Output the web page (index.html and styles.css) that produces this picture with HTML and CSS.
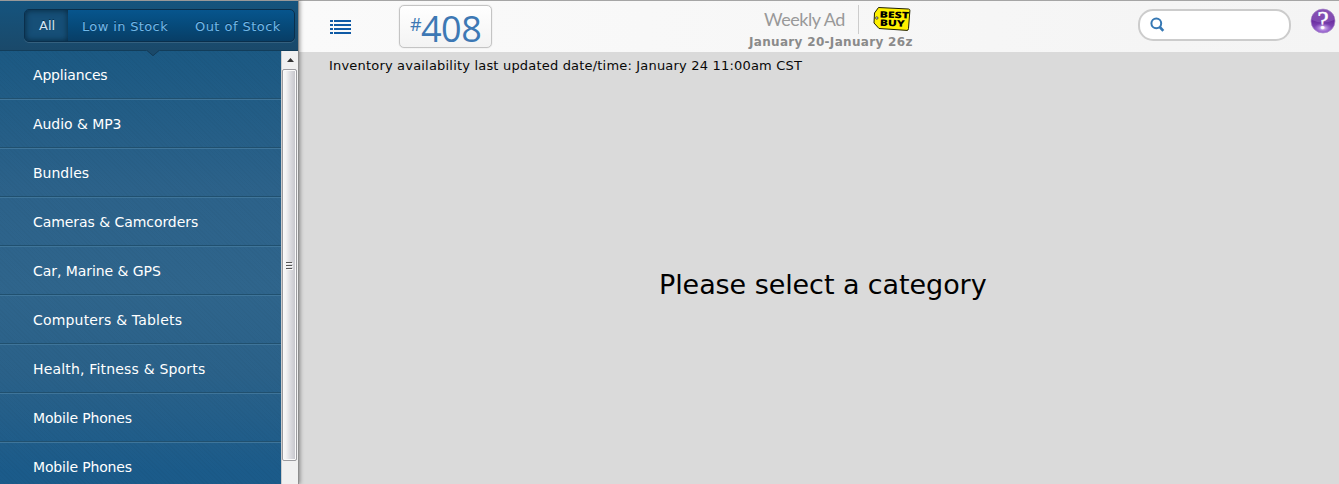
FILE: index.html
```html
<!DOCTYPE html>
<html lang="en">
<head>
<meta charset="utf-8">
<title>Inventory</title>
<link rel="stylesheet" href="styles.css">
</head>
<body>
<div class="app">
  <aside class="sidebar">
    <div class="filters">
      <div class="tabs">
        <span class="tab tab-all">All</span>
        <span class="tab tab-low">Low in Stock</span>
        <span class="tab tab-out">Out of Stock</span>
      </div>
      <svg class="notch" width="14" height="7" viewBox="0 0 14 7"><path d="M0 0H14L7 6Z" fill="#1a496a"/><path d="M1 .5L7 5.7L13 .5" fill="none" stroke="#143b57"/></svg>
    </div>
    <div class="panel">
      <ul class="list">
        <li class="tight">Appliances</li>
        <li class="snug">Audio &amp; MP3</li>
        <li>Bundles</li>
        <li class="snug">Cameras &amp; Camcorders</li>
        <li class="snug">Car, Marine &amp; GPS</li>
        <li class="wide">Computers &amp; Tablets</li>
        <li class="wide">Health, Fitness &amp; Sports</li>
        <li class="tight">Mobile Phones</li>
        <li class="tight">Mobile Phones</li>
      </ul>
      <div class="scrollbar">
        <svg class="arrow" width="17" height="17" viewBox="0 0 17 17"><path d="M5 11L8.500 7L12 11Z" fill="#333"/></svg>
        <div class="thumb">
          <svg width="8" height="9" viewBox="0 0 8 9"><path d="M0 1.500H6M0 4.500H6M0 7.500H6" stroke="#555"/><path d="M1 2.500H7M1 5.500H7M1 8.500H7" stroke="#f8f8f8"/></svg>
        </div>
      </div>
    </div>
  </aside>
  <main class="main">
    <header class="header">
      <svg class="menu" width="21" height="15" viewBox="0 0 21 15" shape-rendering="crispEdges" fill="#0f5aa5"><path d="M0 0h3v2H0zM0 4h3v2H0zM0 8h3v2H0zM0 12h3v2H0zM4 0h17v2H4zM4 4h17v2H4zM4 8h17v2H4zM4 12h17v2H4z"/></svg>
      <div class="store"><span class="hash">#</span><span class="num">408</span></div>
      <div class="ad">
        <div class="ad-top">
          <span class="weekly">Weekly Ad</span>
          <svg class="logo" width="38" height="26" viewBox="0 0 38 26">
            <path d="M5.500 1.500L35.500 3Q37 3.200 36.900 4.500L35.500 22.500Q35.300 24.500 34 24.400L6 22.500L1 17L1.500 7Z" fill="#fff100" stroke="#202000" stroke-width="1"/>
            <circle cx="3.800" cy="12" r="1.200" fill="#eee" stroke="#222" stroke-width=".8"/>
            <g transform="rotate(2 20 13)" font-family="Open Sans, sans-serif" font-weight="800" fill="#000">
              <text x="6.500" y="12" font-size="9" textLength="29.500" lengthAdjust="spacingAndGlyphs">BEST</text>
              <text x="7" y="20.300" font-size="9" textLength="25" lengthAdjust="spacingAndGlyphs">BUY</text>
            </g>
          </svg>
        </div>
        <div class="dates">January 20-January 26z</div>
      </div>
      <div class="search">
        <svg width="15" height="16" viewBox="0 0 15 16" fill="none" stroke="#3678b4"><circle cx="6.300" cy="6.300" r="4.900" stroke-width="2"/><path d="M9.800 10L13.300 13.800" stroke-width="2.600"/></svg>
      </div>
      <svg class="help" width="26" height="30" viewBox="0 -3 26 30">
        <defs>
          <linearGradient id="orb" x1="0" y1="0" x2="0" y2="1"><stop offset="0" stop-color="#7438a4"/><stop offset=".5" stop-color="#6b2ea0"/><stop offset="1" stop-color="#9560ce"/></linearGradient>
          <radialGradient id="glow"><stop offset="0" stop-color="#efdcff"/><stop offset="1" stop-color="#b080e0" stop-opacity="0"/></radialGradient>
        </defs>
        <circle cx="13" cy="13" r="12" fill="url(#orb)" stroke="#a98bc8" stroke-width=".7"/>
        <path d="M2 12Q13 17 24 12A11 11 0 0 0 2 12Z" fill="#a980d0" opacity=".35"/>
        <ellipse cx="13" cy="20" rx="9" ry="5" fill="url(#glow)"/>
        <text x="13" y="20.500" text-anchor="middle" font-family="Liberation Serif, serif" font-size="25" fill="#fff" stroke="#fff" stroke-width=".5">?</text>
      </svg>
    </header>
    <div class="updated">Inventory availability last updated date/time: January 24 11:00am CST</div>
    <div class="empty">Please select a category</div>
  </main>
</div>
</body>
</html>
```
FILE: styles.css
```css
* { box-sizing: border-box; }
body { margin: 0; font-family: Verdana, "DejaVu Sans", sans-serif; }
.app { display: flex; width: 1339px; height: 484px; overflow: hidden; background: #dadada; }
.sidebar { width: 299px; flex: none; display: flex; flex-direction: column; position: relative; z-index: 1; border-right: 1px solid #8d8d8d; box-shadow: 1px 0 4px rgba(0,0,0,.4); }
.filters { height: 51px; flex: none; padding: 8px 0 0 24px; position: relative; z-index: 1; border-top: 1px solid #999; border-bottom: 1px solid #123d5a; background: linear-gradient(#15547e, #1a496a); }
.tabs { width: 271px; height: 33px; display: flex; border: 1px solid #0a2f4c; border-radius: 5px; background: linear-gradient(#07558d, #064a7a 50%, #083e66); box-shadow: 0 1px 0 rgba(255,255,255,.12); font-size: 13px; line-height: 33px; color: #72b8e8; text-shadow: 0 -1px 0 #063050; white-space: nowrap; }
.tab-all { width: 43px; padding-left: 14px; line-height: 31px; color: #d4e6f3; background: #164f77; border-radius: 4px 0 0 4px; box-shadow: inset 0 0 6px #06263d; }
.tab-low { padding-left: 14px; width: 113px; letter-spacing: .36px; }
.tab-out { letter-spacing: .45px; padding-left: 14px; }
.notch { position: absolute; left: 146px; top: 49px; }
.panel { flex: 1; display: flex; min-height: 0; }
.list { width: 281px; margin: -1px 0 0; padding: 0; list-style: none; background: repeating-linear-gradient(45deg, rgba(0,0,0,.025) 0 1px, transparent 1px 3px), linear-gradient(#1b5983, #2c628a 32%, #2f658c 55%, #2a6189 75%, #1b5b8a 97%); }
.list li { height: 49px; padding-left: 33px; border-top: 1px solid #3f759a; border-bottom: 1px solid #20506f; color: #fff; font-size: 14px; line-height: 49px; white-space: nowrap; }
.list .tight { letter-spacing: -.17px; }
.list .snug { letter-spacing: -.06px; }
.list .wide { letter-spacing: .18px; }
.scrollbar { width: 17px; background: #f0f0f0; display: flex; flex-direction: column; border-left: 1px solid #ccc; }
.arrow { display: block; flex: none; }
.thumb { margin: 1px 1px 0 0; height: 392px; flex: none; display: flex; align-items: center; justify-content: center; border: 1px solid #9b9b9f; border-radius: 2px; box-shadow: inset 0 0 0 1px #fafafa; background: linear-gradient(90deg, #f5f5f5 20%, #dcdce0 55%, #c4c4ca); }
.main { flex: 1; display: flex; flex-direction: column; min-width: 0; }
.header { height: 52px; flex: none; display: flex; align-items: flex-start; border-top: 1px solid #a5a5a5; background: linear-gradient(90deg, #fafafa, #f4f4f4); }
.menu { margin: 19px 0 0 31px; flex: none; }
.store { margin: 4px 0 0 48px; width: 93px; height: 43px; flex: none; display: flex; padding-left: 10px; border: 1px solid #c4c4c4; border-radius: 5px; background: linear-gradient(#fff, #f3f3f3); box-shadow: 0 0 1px #bbb; color: #3d78b4; font-family: "Open Sans", sans-serif; }
.hash { font-size: 18px; line-height: 36px; width: 11px; }
.num { font-size: 36px; line-height: 46px; letter-spacing: -.5px; }
.ad { margin: 4px 0 0 257px; width: 166px; flex: none; }
.ad-top { height: 29px; display: flex; align-items: flex-start; }
.weekly { width: 110px; height: 29px; padding-left: 15px; border-right: 1px solid #ccc; color: #999; font-family: Lato, sans-serif; font-weight: 400; font-size: 18px; letter-spacing: -.45px; line-height: 28px; white-space: nowrap; }
.logo { margin-left: 14px; flex: none; margin-top: 1px; }
.dates { color: #8a8a8a; font-weight: bold; font-size: 12px; letter-spacing: .32px; line-height: 17px; white-space: nowrap; }
.search { width: 153px; height: 32px; margin: 8px 0 0 223px; flex: none; padding: 6px 0 0 10px; border: 2px solid #ccc; border-radius: 15px; background: #fff; }
.help { margin: 4px 0 0 19px; flex: none; }
.updated { height: 26px; padding: 4px 0 0 30px; font-size: 13px; letter-spacing: .19px; line-height: 20px; white-space: nowrap; color: #080808; }
.empty { padding: 189px 0 0 360px; font-size: 27px; letter-spacing: -.08px; line-height: 36px; white-space: nowrap; color: #000; }
```
